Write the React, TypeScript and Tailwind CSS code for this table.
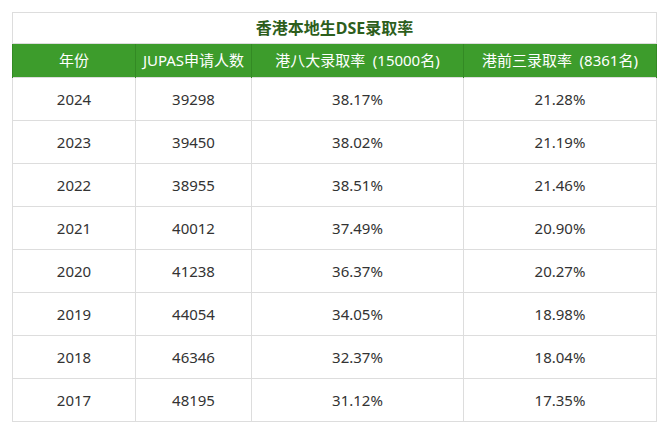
const rows = [
  ["2024", "39298", "38.17%", "21.28%"],
  ["2023", "39450", "38.02%", "21.19%"],
  ["2022", "38955", "38.51%", "21.46%"],
  ["2021", "40012", "37.49%", "20.90%"],
  ["2020", "41238", "36.37%", "20.27%"],
  ["2019", "44054", "34.05%", "18.98%"],
  ["2018", "46346", "32.37%", "18.04%"],
  ["2017", "48195", "31.12%", "17.35%"],
];

const headers = ["年份", "JUPAS申请人数", "港八大录取率\u2002(15000名)", "港前三录取率\u2002(8361名)"];

export default function App() {
  return (
    <div
      className="w-[668px] h-[438px] bg-white pt-3 pl-3"
      style={{ fontFamily: '"Noto Sans", "Noto Sans CJK SC", sans-serif' }}
    >
      <table className="w-[644px] border-collapse table-fixed text-[15px] text-[#333]">
        <colgroup>
          <col className="w-[123px]" />
          <col className="w-[116px]" />
          <col className="w-[212px]" />
          <col className="w-[193px]" />
        </colgroup>
        <thead>
          <tr className="h-[31px]">
            <th colSpan={4} className="border border-[#ddd] text-[16px] font-bold text-[#2d5e1c] text-center">
              香港本地生DSE录取率
            </th>
          </tr>
          <tr className="h-[34px] bg-[#3d9c2c] text-white text-[15px]">
            {headers.map((h) => (
              <th key={h} className="border-x border-[#338a24] font-normal text-center whitespace-nowrap">
                {h}
              </th>
            ))}
          </tr>
        </thead>
        <tbody>
          {rows.map((r) => (
            <tr key={r[0]} className="h-[43px]">
              {r.map((c, i) => (
                <td key={i} className="border border-[#ddd] text-center">
                  {c}
                </td>
              ))}
            </tr>
          ))}
        </tbody>
      </table>
    </div>
  );
}
